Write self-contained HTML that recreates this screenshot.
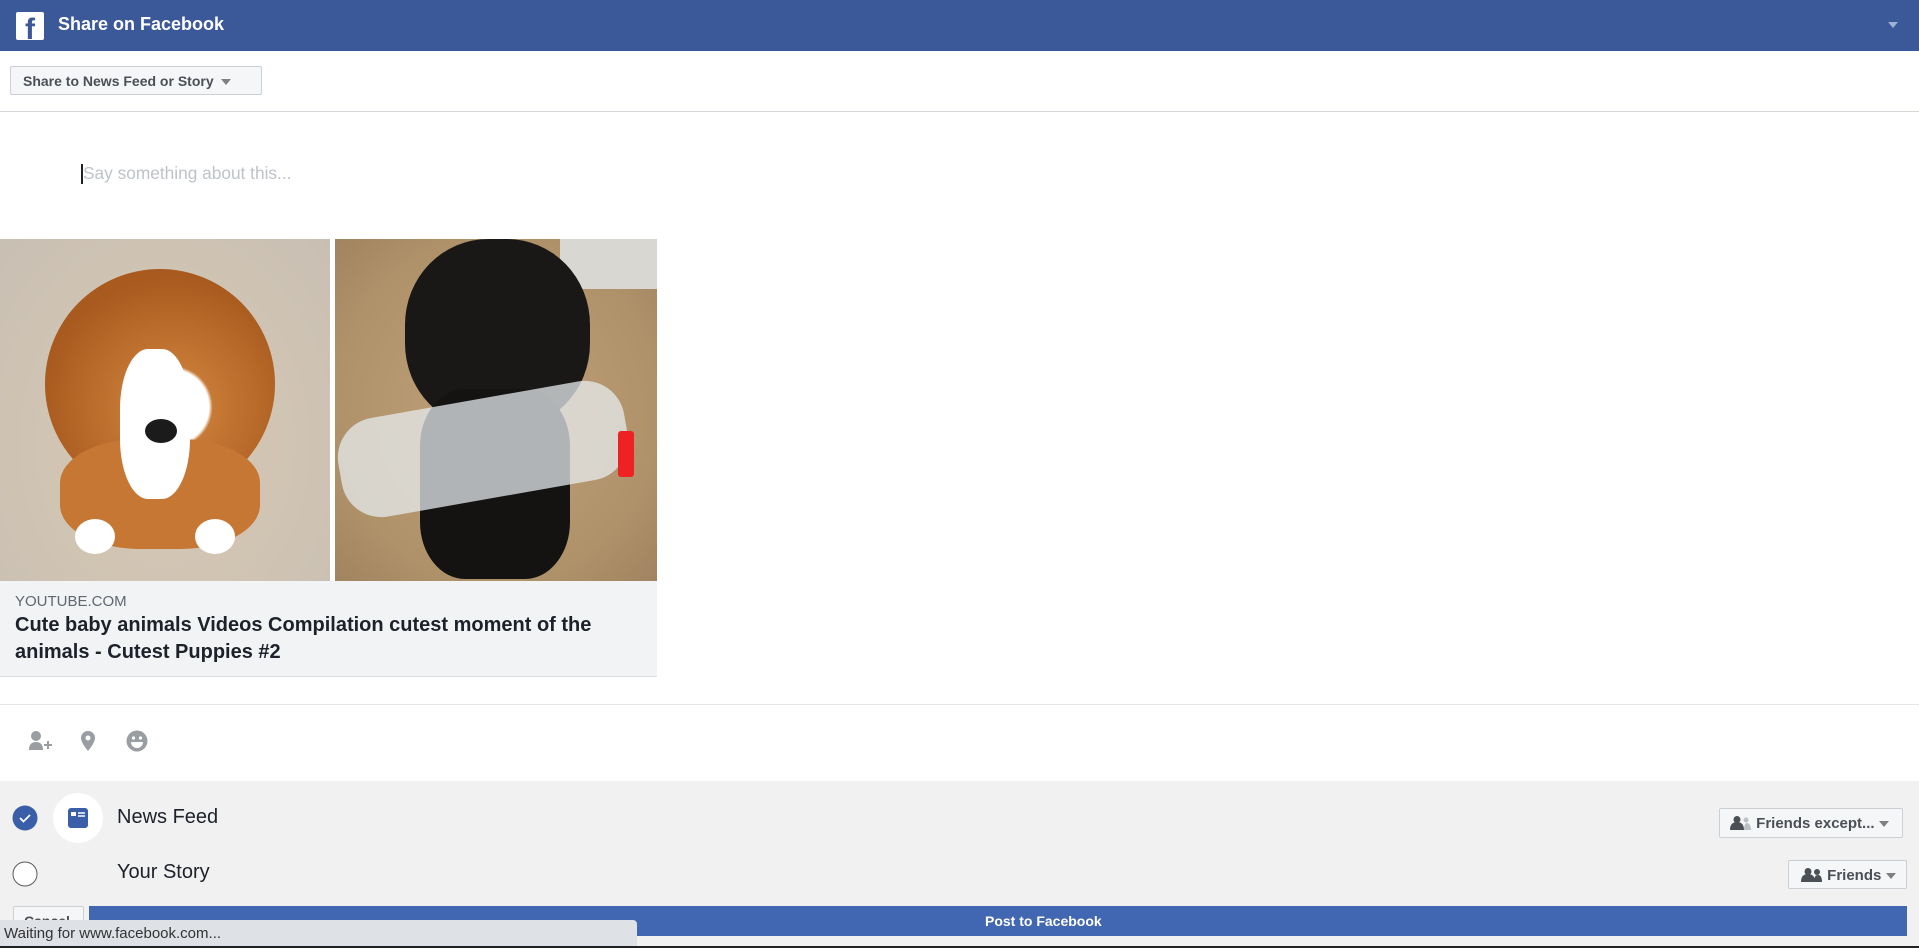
<!DOCTYPE html>
<html><head><meta charset="utf-8"><style>
*{margin:0;padding:0;box-sizing:border-box}
body{width:1919px;height:948px;overflow:hidden;background:#fff;font-family:"Liberation Sans",Arial,sans-serif;position:relative}
.a{position:absolute}
.hdr{left:0;top:0;width:1919px;height:51px;background:#3b5998}
.btn{background:#f5f6f7;border:1px solid #ccd0d5;border-radius:2px;color:#4b4f56;font-weight:bold;font-size:14px}
.tri{display:inline-block;width:0;height:0;border-left:5px solid transparent;border-right:5px solid transparent;border-top:6px solid #7f7f7f;vertical-align:middle}
</style></head><body>
<div class="a hdr"></div>
<div class="a" style="left:16px;top:12px;width:28px;height:28px;background:#fff;border-radius:2px;overflow:hidden">
<div class="a" style="left:9px;top:3px;font:bold 30px 'Liberation Sans',sans-serif;color:#3b5998;line-height:30px">f</div></div>
<div class="a" style="left:58px;top:14px;color:#fff;font-weight:bold;font-size:18px">Share on Facebook</div>
<div class="a" style="left:1888px;top:22px;line-height:6px"><span class="tri" style="border-top-color:#9fb0d4;vertical-align:top"></span></div>

<div class="a btn" style="left:10px;top:66px;width:252px;height:29px;padding:6px 0 0 12px">Share to News Feed or Story &nbsp;<span class="tri"></span></div>
<div class="a" style="left:0;top:111px;width:1919px;height:1px;background:#d3d6db"></div>
<div class="a" style="left:81px;top:164px;width:2px;height:20px;background:#1d2129"></div>
<div class="a" style="left:83px;top:163px;color:#bec3c9;font-size:17.3px">Say something about this...</div>

<div class="a" style="left:0;top:239px;width:657px;height:342px;background:#e5e5e5;overflow:hidden">
 <div class="a" style="left:0;top:0;width:330px;height:342px;background:radial-gradient(ellipse at 50% 60%,#d8c8b4 0,#cfc3b3 60%,#c8bfb3 100%)"></div>
 <div class="a" style="left:45px;top:30px;width:230px;height:230px;border-radius:50%;background:radial-gradient(circle at 55% 60%,#fff 0,#fff 20%,#c77a35 22%,#a85a1f 70%)"></div>
 <div class="a" style="left:60px;top:200px;width:200px;height:110px;border-radius:40%;background:#c57733"></div>
 <div class="a" style="left:120px;top:110px;width:70px;height:150px;border-radius:40%;background:#fff"></div>
 <div class="a" style="left:145px;top:180px;width:32px;height:24px;border-radius:50%;background:#1b1b1b"></div>
 <div class="a" style="left:75px;top:280px;width:40px;height:35px;border-radius:50%;background:#fff"></div>
 <div class="a" style="left:195px;top:280px;width:40px;height:35px;border-radius:50%;background:#fff"></div>
 <div class="a" style="left:330px;top:0;width:5px;height:342px;background:#fff"></div>
 <div class="a" style="left:335px;top:0;width:322px;height:342px;background:radial-gradient(ellipse at 50% 50%,#bfa07a 0,#b0926a 70%,#a08460 100%)"></div>
 <div class="a" style="left:560px;top:0;width:97px;height:50px;background:#d9d7d2"></div>
 <div class="a" style="left:405px;top:0;width:185px;height:190px;border-radius:45%;background:#1a1817"></div>
 <div class="a" style="left:420px;top:150px;width:150px;height:190px;border-radius:30%;background:#141312"></div>
 <div class="a" style="left:338px;top:160px;width:290px;height:100px;border-radius:40px;background:rgba(230,235,238,.75);transform:rotate(-10deg)"></div>
 <div class="a" style="left:618px;top:192px;width:16px;height:46px;background:#e22;border-radius:3px"></div>
</div>
<div class="a" style="left:0;top:581px;width:657px;height:96px;background:#f2f3f5;border-bottom:1px solid #dddfe2"></div>
<div class="a" style="left:15px;top:593px;color:#606770;font-size:15px">YOUTUBE.COM</div>
<div class="a" style="left:15px;top:612px;color:#1d2129;font-weight:bold;font-size:20px;line-height:27px;white-space:nowrap">Cute baby animals Videos Compilation cutest moment of the<br>animals - Cutest Puppies #2</div>

<div class="a" style="left:0;top:704px;width:1919px;height:1px;background:#e5e5e5"></div>
<svg class="a" style="left:26px;top:730px" width="28" height="24" viewBox="0 0 28 24"><circle cx="10" cy="6" r="5" fill="#9a9da2"/><path d="M3 20c0-6 3-8 7-8s7 2 7 8z" fill="#9a9da2"/><path d="M18 15h8M22 11v8" stroke="#9a9da2" stroke-width="2"/></svg>
<svg class="a" style="left:80px;top:730px" width="16" height="22" viewBox="0 0 16 22"><path d="M8 1a7 7 0 0 0-7 7c0 5 7 13 7 13s7-8 7-13a7 7 0 0 0-7-7z" fill="#9a9da2"/><circle cx="8" cy="8" r="2.5" fill="#fff"/></svg>
<svg class="a" style="left:126px;top:730px" width="22" height="22" viewBox="0 0 22 22"><circle cx="11" cy="11" r="10.5" fill="#9a9da2"/><circle cx="7.5" cy="8" r="1.6" fill="#fff"/><circle cx="14.5" cy="8" r="1.6" fill="#fff"/><path d="M5 12h12a6 6 0 0 1-12 0z" fill="#fff"/></svg>

<div class="a" style="left:0;top:781px;width:1919px;height:167px;background:#f1f1f1"></div>
<svg class="a" style="left:12px;top:805px" width="26" height="26"><circle cx="13" cy="13" r="12.5" fill="#3b5ea8"/><path d="M8 13l3.5 3.5L18 10" stroke="#fff" stroke-width="1.8" fill="none"/></svg>
<div class="a" style="left:53px;top:793px;width:50px;height:50px;border-radius:50%;background:#fff"></div>
<svg class="a" style="left:67px;top:807px" width="22" height="22"><rect x="1" y="1" width="20" height="20" rx="3" fill="#3b5ea8"/><rect x="4" y="5" width="5" height="4" fill="#fff"/><path d="M11 6h7M11 9h7" stroke="#fff" stroke-width="1.5"/></svg>
<div class="a" style="left:117px;top:806px;font-size:20px;color:#1d2129">News Feed</div>
<svg class="a" style="left:12px;top:861px" width="26" height="26"><circle cx="13" cy="13" r="12" fill="#fff" stroke="#5a5a5a" stroke-width="1"/></svg>
<div class="a" style="left:117px;top:861px;font-size:20px;color:#1d2129">Your Story</div>

<div class="a btn" style="left:1719px;top:808px;width:184px;height:30px;padding:6px 0 0 10px;font-size:15px">
<svg width="22" height="14" style="vertical-align:-2px"><circle cx="7" cy="3.5" r="3.5" fill="#4b4f56"/><path d="M0 14c0-6 3-8 7-8s7 2 7 8z" fill="#4b4f56"/><circle cx="16" cy="4" r="2.5" fill="#bcc0c4"/><path d="M14 14c0-4 1-7 3-7s4 3 4 7z" fill="#bcc0c4"/></svg> Friends except... <span class="tri"></span></div>
<div class="a btn" style="left:1788px;top:860px;width:119px;height:29px;padding:6px 0 0 12px;font-size:15px">
<svg width="22" height="14" style="vertical-align:-2px"><circle cx="7" cy="3.5" r="3.5" fill="#4b4f56"/><path d="M0 14c0-6 3-8 7-8s7 2 7 8z" fill="#4b4f56"/><circle cx="16" cy="4" r="3" fill="#4b4f56"/><path d="M13 14c0-4 1-7 4-7s4 3 4 7z" fill="#4b4f56"/></svg> Friends <span class="tri"></span></div>

<div class="a btn" style="left:13px;top:906px;width:71px;height:30px;padding:6px 0 0 10px">Cancel</div>
<div class="a" style="left:89px;top:906px;width:1818px;height:30px;background:#4267b2;color:#fff;font-weight:bold;font-size:14px;line-height:30px;padding-left:896px;white-space:nowrap">Post to Facebook</div>
<div class="a" style="left:0;top:920px;width:637px;height:28px;background:#dee1e6;border-radius:0 4px 0 0;color:#333;font-size:15px;padding:5px 0 0 4px;white-space:nowrap">Waiting for www.facebook.com...</div>
<div class="a" style="left:0;top:946px;width:1919px;height:2px;background:#222"></div>
</body></html>
